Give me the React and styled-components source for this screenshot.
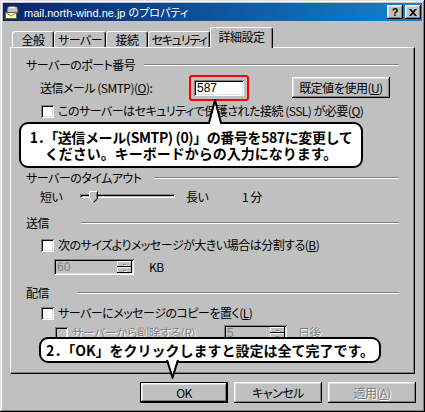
import styled, { createGlobalStyle } from "styled-components";

const UI_FONT = `"Noto Sans CJK JP", "Liberation Sans", sans-serif`;

const GlobalStyle = createGlobalStyle`
  html, body { margin: 0; padding: 0; background: #c0c0c0; }
  body { font-family: ${UI_FONT}; font-size: 12px; color: #000; }
  #root { width: 425px; height: 412px; }
`;

const bevel = `inset -1px -1px #000, inset 1px 1px #fff, inset -2px -2px #808080, inset 2px 2px #dfdfdf`;
const sunken = `inset 1px 1px #808080, inset -1px -1px #fff, inset 2px 2px #000, inset -2px -2px #dfdfdf`;

const Window = styled.div`
  position: relative;
  width: 425px;
  height: 412px;
  box-sizing: border-box;
  padding: 3px;
  background: #c0c0c0;
  box-shadow: inset -1px -1px #000, inset 1px 1px #dfdfdf, inset -2px -2px #808080, inset 2px 2px #fff;
  display: flex;
  flex-direction: column;
  font-family: ${UI_FONT};
  font-size: 12px;
  font-feature-settings: "palt";
  letter-spacing: -0.5px;
  overflow: hidden;
`;

const TitleBar = styled.div`
  height: 18px;
  flex: none;
  display: flex;
  align-items: center;
  padding: 0 1px 0 1px;
  background: linear-gradient(to right, #0a246a, #1084d0);
  color: #fff;
  letter-spacing: 0;
`;

const TitleText = styled.span`
  flex: 1;
  margin-left: 4px;
  font-family: "Liberation Sans", "Noto Sans CJK JP", sans-serif;
  font-size: 11px;
  white-space: nowrap;
`;

const CaptionButton = styled.div`
  width: 16px;
  height: 14px;
  box-sizing: border-box;
  background: #c0c0c0;
  box-shadow: ${bevel};
  display: flex;
  align-items: center;
  justify-content: center;
  color: #000;
  font: bold 11px "Liberation Sans", sans-serif;
  & + & { margin-left: 2px; }
`;

const Body = styled.div`
  padding: 7px 7px 0;
  display: flex;
  flex-direction: column;
`;

const TabRow = styled.div`
  display: flex;
  align-items: flex-end;
  height: 20px;
  padding-left: 2px;
  position: relative;
  z-index: 1;
  margin-bottom: -1px;
`;

const Tab = styled.div`
  box-sizing: border-box;
  width: ${(p) => p.$w}px;
  height: ${(p) => (p.$active ? 21 : 16)}px;
  margin-bottom: ${(p) => (p.$active ? 0 : 1)}px;
  background: #c0c0c0;
  border-top: 1px solid #fff;
  border-left: 1px solid #fff;
  border-right: 1px solid #000;
  border-radius: 3px 3px 0 0;
  box-shadow: inset -1px 0 #808080;
  display: flex;
  align-items: center;
  justify-content: center;
  padding-bottom: ${(p) => (p.$active ? 3 : 0)}px;
  white-space: nowrap;
  line-height: 14px;
  letter-spacing: ${(p) => (p.$tight ? "-1.2px" : "-0.5px")};
`;

const Panel = styled.div`
  box-sizing: border-box;
  height: 327px;
  border-top: 1px solid #fff;
  border-left: 1px solid #fff;
  border-right: 1px solid #000;
  border-bottom: 1px solid #000;
  box-shadow: inset -1px -1px #808080;
  padding: 10px 15px 0 15px;
  display: flex;
  flex-direction: column;
`;

const GroupHeader = styled.div`
  display: flex;
  align-items: center;
  height: 14px;
  margin-top: ${(p) => p.$mt || 0}px;
`;

const GroupLabel = styled.span`
  width: ${(p) => p.$w}px;
  flex: none;
  white-space: nowrap;
  line-height: 14px;
`;

const Etch = styled.div`
  flex: 1;
  border-top: 1px solid #808080;
  border-bottom: 1px solid #fff;
`;

const Row = styled.div`
  display: flex;
  align-items: center;
  height: ${(p) => p.$h || 14}px;
  margin-top: ${(p) => p.$mt || 0}px;
  padding-left: ${(p) => p.$indent || 0}px;
  white-space: nowrap;
  line-height: 14px;
`;

const Label = styled.span`
  flex: none;
  width: ${(p) => (p.$w ? `${p.$w}px` : "auto")};
  margin-left: ${(p) => p.$ml || 0}px;
  color: ${(p) => (p.$disabled ? "#808080" : "#000")};
  text-shadow: ${(p) => (p.$disabled ? "1px 1px #fff" : "none")};
`;

const RedMark = styled.div`
  flex: none;
  border: 2px solid #f00;
  border-radius: 3px;
  padding: 3px;
`;

const TextField = styled.div`
  box-sizing: border-box;
  width: ${(p) => p.$w}px;
  height: 16px;
  padding: 0 3px;
  background: ${(p) => (p.$disabled ? "#c0c0c0" : "#fff")};
  color: ${(p) => (p.$disabled ? "#808080" : "#000")};
  box-shadow: ${sunken};
  display: flex;
  align-items: center;
  position: relative;
  font-family: "Liberation Sans", sans-serif;
  font-size: 12px;
  letter-spacing: 0;
`;

const SpinButtons = styled.div`
  position: absolute;
  right: 2px;
  top: 2px;
  bottom: 2px;
  width: 15px;
  display: flex;
  flex-direction: column;
`;

const SpinHalf = styled.div`
  flex: 1;
  background: #c0c0c0;
  box-shadow: inset -1px -1px #000, inset 1px 1px #fff;
  display: flex;
  align-items: center;
  justify-content: center;
  &::after {
    content: "";
    width: 3px;
    height: 1px;
    background: #808080;
    box-shadow: 1px 1px #fff;
  }
`;

const Button = styled.div`
  box-sizing: border-box;
  flex: none;
  width: ${(p) => p.$w || 88}px;
  height: 21px;
  margin-left: ${(p) => p.$ml || 0}px;
  background: #c0c0c0;
  border: ${(p) => (p.$default ? "1px solid #000" : "none")};
  box-shadow: ${bevel};
  display: flex;
  align-items: center;
  justify-content: center;
  white-space: nowrap;
  color: ${(p) => (p.$disabled ? "#808080" : "#000")};
  text-shadow: ${(p) => (p.$disabled ? "1px 1px #fff" : "none")};
`;

const Check = styled.div`
  box-sizing: border-box;
  flex: none;
  width: 13px;
  height: 13px;
  background: ${(p) => (p.$disabled ? "#c0c0c0" : "#fff")};
  box-shadow: ${sunken};
`;

const SliderTrack = styled.div`
  position: relative;
  flex: none;
  width: 95px;
  height: 14px;
  &::before {
    content: "";
    position: absolute;
    left: 0;
    right: 0;
    top: 4px;
    height: 4px;
    box-shadow: inset 1px 1px #808080, inset -1px -1px #fff, inset 2px 2px #000;
  }
`;

const Thumb = styled.svg`
  position: absolute;
  left: ${(p) => p.$pos}px;
  top: 1px;
`;

const ButtonRow = styled.div`
  display: flex;
  justify-content: flex-end;
  gap: 6px;
  margin-top: 8px;
  margin-right: -1px;
`;

const Callout = styled.div`
  position: absolute;
  left: ${(p) => p.$x}px;
  top: ${(p) => p.$y}px;
  width: ${(p) => p.$w}px;
  height: ${(p) => p.$h}px;
  box-sizing: border-box;
  background: #fff;
  border: 2px solid #000;
  border-radius: 9px;
  display: flex;
  flex-direction: column;
  align-items: center;
  justify-content: center;
  font: bold 14px/16px "Noto Sans CJK JP", sans-serif;
  font-feature-settings: normal;
  letter-spacing: 0;
  white-space: nowrap;
  z-index: 5;
`;

const CalloutLine = styled.div`
  letter-spacing: ${(p) => (p.$tight ? "-0.4px" : "0")};
`;

const Pointer = styled.svg`
  position: absolute;
  left: ${(p) => p.$x}px;
  top: ${(p) => p.$y}px;
  z-index: 6;
`;

function MailIcon() {
  return (
    <svg width="16" height="16" viewBox="0 0 16 16">
      <path d="M3 9 L3 5 Q3 2 8 2 Q14 2 14 5 L14 9 Z" fill="#c0c0c0" stroke="#404040" />
      <path d="M5 4 Q8 3 11 4" stroke="#fff" fill="none" />
      <rect x="1.5" y="8.5" width="11" height="6" fill="#ffffa0" stroke="#606060" />
      <path d="M1.5 8.5 L7 12 L12.5 8.5" stroke="#808080" fill="none" />
    </svg>
  );
}

export default function App() {
  return (
    <>
      <GlobalStyle />
      <Window>
        <TitleBar>
          <MailIcon />
          <TitleText>mail.north-wind.ne.jp のプロパティ</TitleText>
          <CaptionButton>?</CaptionButton>
          <CaptionButton>
            <svg width="8" height="7" viewBox="0 0 8 7">
              <path d="M0 0 L2 0 L4 2 L6 0 L8 0 L5 3.5 L8 7 L6 7 L4 5 L2 7 L0 7 L3 3.5 Z" fill="#000" />
            </svg>
          </CaptionButton>
        </TitleBar>

        <Body>
          <TabRow>
            <Tab $w={42}>全般</Tab>
            <Tab $w={52}>サーバー</Tab>
            <Tab $w={42}>接続</Tab>
            <Tab $w={62} $tight>セキュリティ</Tab>
            <Tab $w={63} $active>詳細設定</Tab>
          </TabRow>

          <Panel>
            <GroupHeader>
              <GroupLabel $w={118}>サーバーのポート番号</GroupLabel>
              <Etch />
            </GroupHeader>
            <Row $h={21} $mt={5} $indent={14}>
              <Label $w={149}>
                送信メール (SMTP)(<u>O</u>):
              </Label>
              <RedMark>
                <TextField $w={50}>587</TextField>
              </RedMark>
              <Button $w={98} $ml={43}>
                既定値を使用(<u>U</u>)
              </Button>
            </Row>
            <Row $mt={6} $indent={15}>
              <Check />
              <Label $ml={4}>
                このサーバーはセキュリティで保護された接続 (SSL) が必要(<u>Q</u>)
              </Label>
            </Row>

            <GroupHeader $mt={53}>
              <GroupLabel $w={128}>サーバーのタイムアウト</GroupLabel>
              <Etch />
            </GroupHeader>
            <Row $mt={5} $indent={14}>
              <Label $w={40}>短い</Label>
              <SliderTrack>
                <Thumb $pos={9} width="9" height="12" viewBox="0 0 9 12">
                  <polygon points="0.5,0.5 8.5,0.5 8.5,8 4.5,11.5 0.5,8" fill="#c0c0c0" />
                  <polyline points="4.5,11.5 0.5,8 0.5,0.5 8.5,0.5" fill="none" stroke="#fff" />
                  <polyline points="8.5,0.5 8.5,8 4.5,11.5" fill="none" stroke="#000" />
                  <polyline points="7.5,1.5 7.5,7.5 4.5,10.3" fill="none" stroke="#808080" />
                </Thumb>
              </SliderTrack>
              <Label $w={56} $ml={11}>長い</Label>
              <Label>1 分</Label>
            </Row>

            <GroupHeader $mt={12}>
              <GroupLabel $w={55}>送信</GroupLabel>
              <Etch />
            </GroupHeader>
            <Row $mt={8} $indent={15}>
              <Check />
              <Label $ml={4}>
                次のサイズよりメッセージが大きい場合は分割する(<u>B</u>)
              </Label>
            </Row>
            <Row $h={16} $mt={7} $indent={28}>
              <TextField $w={80} $disabled>
                60
                <SpinButtons>
                  <SpinHalf />
                  <SpinHalf />
                </SpinButtons>
              </TextField>
              <Label $ml={15}>KB</Label>
            </Row>

            <GroupHeader $mt={11}>
              <GroupLabel $w={51}>配信</GroupLabel>
              <Etch />
            </GroupHeader>
            <Row $mt={6} $indent={15}>
              <Check />
              <Label $ml={4}>
                サーバーにメッセージのコピーを置く(<u>L</u>)
              </Label>
            </Row>
            <Row $h={16} $mt={5} $indent={29}>
              <Check $disabled />
              <Label $w={152} $ml={4} $disabled>
                サーバーから削除する(<u>R</u>)
              </Label>
              <TextField $w={63} $disabled>
                5
                <SpinButtons>
                  <SpinHalf />
                  <SpinHalf />
                </SpinButtons>
              </TextField>
              <Label $ml={11} $disabled>日後</Label>
            </Row>
          </Panel>

          <ButtonRow>
            <Button $default>OK</Button>
            <Button>キャンセル</Button>
            <Button $disabled>
              適用(<u>A</u>)
            </Button>
          </ButtonRow>
        </Body>

        <Callout $x={19} $y={122} $w={344} $h={46}>
          <CalloutLine $tight>1．「送信メール(SMTP) (0)」の番号を587に変更して</CalloutLine>
          <CalloutLine>ください。キーボードからの入力になります。</CalloutLine>
        </Callout>
        <Pointer $x={207} $y={99} width="16" height="26" viewBox="0 0 16 26">
          <polygon points="2.5,26 8,2 13.5,26" fill="#fff" />
          <polyline points="2,24 8,1 14,24" fill="none" stroke="#000" strokeWidth="2" />
        </Pointer>

        <Callout $x={39} $y={337} $w={342} $h={26}>
          <CalloutLine>2．「OK」をクリックしますと設定は全て完了です。</CalloutLine>
        </Callout>
        <Pointer $x={165} $y={358} width="15" height="21" viewBox="0 0 15 21">
          <polygon points="2.5,0 7.5,18 12.5,0" fill="#fff" />
          <polyline points="2,2 7.5,19.5 13,2" fill="none" stroke="#000" strokeWidth="2" />
        </Pointer>
      </Window>
    </>
  );
}
